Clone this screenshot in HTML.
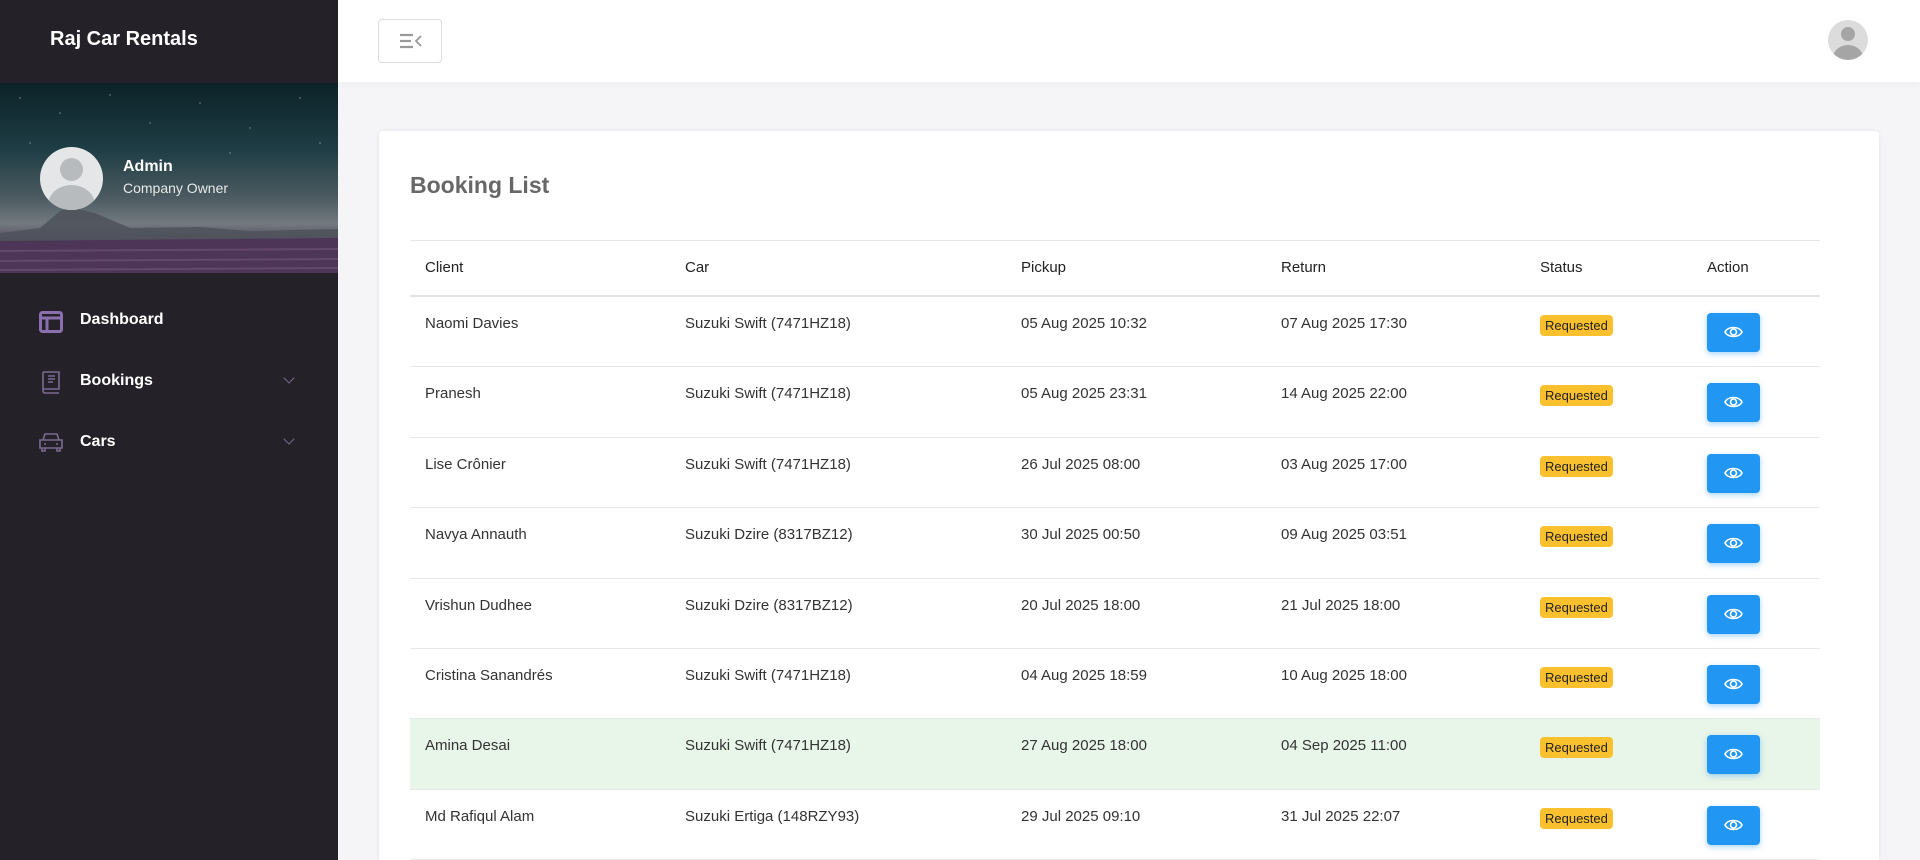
<!DOCTYPE html>
<html><head><meta charset="utf-8"><style>
*{box-sizing:border-box;margin:0;padding:0}
html,body{overflow:hidden}
body{width:1920px;height:860px;background:#f5f5f8;font-family:"Liberation Sans",Arial,sans-serif;position:relative}
.side{position:absolute;left:0;top:0;width:338px;height:860px;background:#242228}
.brand{position:absolute;left:50px;top:28px;color:#fff;font-size:20px;font-weight:bold}
.banner{position:absolute;left:0;top:83px;width:338px;height:190px;overflow:hidden;
background:linear-gradient(180deg,#0c2228 0%,#1f3d45 35%,#4a5a60 60%,#737a80 74%,#5a4f64 82%,#4c3556 92%,#3e2a47 100%)}
.av{position:absolute;left:40px;top:147px;width:63px;height:63px;border-radius:50%;background:#e4e6e8;overflow:hidden}
.av:before{content:"";position:absolute;left:20px;top:11px;width:23px;height:23px;border-radius:50%;background:#b8bbbe}
.av:after{content:"";position:absolute;left:8px;top:38px;width:47px;height:40px;border-radius:50%;background:#b8bbbe}
.adm{position:absolute;left:123px;top:158px;color:#fff;font-size:16px;font-weight:bold}
.own{position:absolute;left:123px;top:180px;color:#e8e8e8;font-size:14px}
.menu{position:absolute;left:0;width:338px;color:#fff;font-size:16px;font-weight:bold}
.menu svg{position:absolute;left:39px}
.menu span{position:absolute;left:80px}
.chev{position:absolute;left:285px;width:8px;height:8px;border-right:1.5px solid #7b6a90;border-bottom:1.5px solid #7b6a90;transform:rotate(45deg)}
.top{position:absolute;left:338px;top:0;width:1582px;height:82px;background:#fff;box-shadow:0 2px 8px rgba(0,0,0,.04)}
.tog{position:absolute;left:40px;top:19px;width:64px;height:44px;border:1px solid #ddd;border-radius:4px}
.uav{position:absolute;left:1490px;top:20px;width:40px;height:40px;border-radius:50%;background:#dcdcdc;overflow:hidden}
.uav:before{content:"";position:absolute;left:13px;top:7px;width:14px;height:14px;border-radius:50%;background:#a5a5a5}
.uav:after{content:"";position:absolute;left:5px;top:25px;width:30px;height:26px;border-radius:50%;background:#a5a5a5}
.card{position:absolute;left:379px;top:131px;width:1500px;height:729px;background:#fff;border-radius:4px 4px 0 0;box-shadow:0 0 4px rgba(0,0,0,.08)}
h2{position:absolute;left:31px;top:41px;font-size:23px;color:#676767}
.tbl{position:absolute;left:31px;top:109px;width:1410px;border-top:1px solid #e6e6e6}
.row{position:relative;height:70.4px;border-bottom:1px solid #e8e8e8;font-size:15px;color:#333}
.hd{height:56px;border-bottom:2px solid #e3e3e3;font-size:15px;color:#222}
.row div{position:absolute;top:17px;line-height:20px}
.hd div{top:17px}
.c1{left:15px}.c2{left:275px}.c3{left:611px}.c4{left:871px}.c5{left:1130px}.c6{left:1297px}
.badge{background:#fbc02d;color:#222;font-size:13px;border-radius:4px;padding:0 5px;line-height:21px!important;top:18px!important;display:inline-block}
.btn{width:53px;height:39px;background:#2196f3;border-radius:4px;box-shadow:0 2px 6px rgba(33,150,243,.4);top:16px!important}
.btn svg{position:absolute;left:17px;top:11px}
.hl{background:#e8f5e9}
</style></head><body>
<div class="side">
<div class="brand">Raj Car Rentals</div>
<div class="banner">
<svg width="338" height="190" style="position:absolute;left:0;top:0">
<g fill="#fff" opacity=".5"><circle cx="20" cy="15" r=".7"/><circle cx="60" cy="30" r=".7"/><circle cx="110" cy="12" r=".7"/><circle cx="150" cy="40" r=".7"/><circle cx="200" cy="20" r=".7"/><circle cx="250" cy="45" r=".7"/><circle cx="300" cy="15" r=".7"/><circle cx="320" cy="60" r=".7"/><circle cx="230" cy="70" r=".7"/><circle cx="30" cy="60" r=".7"/></g>
<path d="M0 150 L40 145 L60 128 L70 124 L95 130 L130 145 L200 144 L250 148 L338 146 L338 160 L0 160Z" fill="#4d525a" opacity=".85"/>
<path d="M0 158 L338 155 L338 190 L0 190Z" fill="#4c3556"/>
<g stroke="#7a5a85" stroke-width="2" opacity=".5"><line x1="0" y1="168" x2="338" y2="166"/><line x1="0" y1="178" x2="338" y2="176"/><line x1="0" y1="187" x2="338" y2="185"/></g>
</svg>
</div>
<div class="av"></div>
<div class="adm">Admin</div>
<div class="own">Company Owner</div>
<div class="menu" style="top:311px"><svg width="24" height="22" viewBox="0 0 24 22" style="top:0"><rect x="1.5" y="1.5" width="21" height="19" rx="2" fill="none" stroke="#8a6fae" stroke-width="3"/><line x1="1.5" y1="7" x2="22" y2="7" stroke="#8a6fae" stroke-width="3"/><line x1="8" y1="7" x2="8" y2="20" stroke="#8a6fae" stroke-width="3"/></svg><span>Dashboard</span></div>
<div class="menu" style="top:372px"><svg width="24" height="24" viewBox="0 0 24 24" style="top:-2px"><path d="M4 2h16v17H6a2 2 0 0 0 0 4h14M4 2v19" fill="none" stroke="#7b6a90" stroke-width="1.6"/><path d="M9 6h7M9 9h7M9 12h5" stroke="#7b6a90" stroke-width="1.5"/></svg><span>Bookings</span><div class="chev" style="top:2px"></div></div>
<div class="menu" style="top:433px"><svg width="24" height="20" viewBox="0 0 24 20" style="top:-1px"><path d="M4 8l2-6h12l2 6M1 8h22v8H1zM3 16v3h3v-3M18 16v3h3v-3M5 12h2M17 12h2" fill="none" stroke="#7b6a90" stroke-width="1.6"/></svg><span>Cars</span><div class="chev" style="top:2px"></div></div>
</div>
<div class="top">
<div class="tog"><svg width="24" height="16" viewBox="0 0 24 16" style="position:absolute;left:20px;top:13px"><path d="M1 2h13M1 8h11M1 14h13" stroke="#999" stroke-width="2.2"/><path d="M22 3l-5 5 5 5" fill="none" stroke="#999" stroke-width="1.8"/></svg></div>
<div class="uav"></div>
</div>
<div class="card">
<h2>Booking List</h2>
<div class="tbl">
<div class="row hd"><div class="c1">Client</div><div class="c2">Car</div><div class="c3">Pickup</div><div class="c4">Return</div><div class="c5">Status</div><div class="c6">Action</div></div>
<div class="row"><div class="c1">Naomi Davies</div><div class="c2">Suzuki Swift (7471HZ18)</div><div class="c3">05 Aug 2025 10:32</div><div class="c4">07 Aug 2025 17:30</div><div class="c5 badge">Requested</div><div class="c6 btn"><svg width="19" height="16" viewBox="0 0 19 16"><path d="M1 8C4 2 15 2 18 8C15 14 4 14 1 8Z" fill="none" stroke="#fff" stroke-width="1.6"/><circle cx="9.5" cy="8" r="3" fill="none" stroke="#fff" stroke-width="1.6"/></svg></div></div>
<div class="row"><div class="c1">Pranesh</div><div class="c2">Suzuki Swift (7471HZ18)</div><div class="c3">05 Aug 2025 23:31</div><div class="c4">14 Aug 2025 22:00</div><div class="c5 badge">Requested</div><div class="c6 btn"><svg width="19" height="16" viewBox="0 0 19 16"><path d="M1 8C4 2 15 2 18 8C15 14 4 14 1 8Z" fill="none" stroke="#fff" stroke-width="1.6"/><circle cx="9.5" cy="8" r="3" fill="none" stroke="#fff" stroke-width="1.6"/></svg></div></div>
<div class="row"><div class="c1">Lise Crônier</div><div class="c2">Suzuki Swift (7471HZ18)</div><div class="c3">26 Jul 2025 08:00</div><div class="c4">03 Aug 2025 17:00</div><div class="c5 badge">Requested</div><div class="c6 btn"><svg width="19" height="16" viewBox="0 0 19 16"><path d="M1 8C4 2 15 2 18 8C15 14 4 14 1 8Z" fill="none" stroke="#fff" stroke-width="1.6"/><circle cx="9.5" cy="8" r="3" fill="none" stroke="#fff" stroke-width="1.6"/></svg></div></div>
<div class="row"><div class="c1">Navya Annauth</div><div class="c2">Suzuki Dzire (8317BZ12)</div><div class="c3">30 Jul 2025 00:50</div><div class="c4">09 Aug 2025 03:51</div><div class="c5 badge">Requested</div><div class="c6 btn"><svg width="19" height="16" viewBox="0 0 19 16"><path d="M1 8C4 2 15 2 18 8C15 14 4 14 1 8Z" fill="none" stroke="#fff" stroke-width="1.6"/><circle cx="9.5" cy="8" r="3" fill="none" stroke="#fff" stroke-width="1.6"/></svg></div></div>
<div class="row"><div class="c1">Vrishun Dudhee</div><div class="c2">Suzuki Dzire (8317BZ12)</div><div class="c3">20 Jul 2025 18:00</div><div class="c4">21 Jul 2025 18:00</div><div class="c5 badge">Requested</div><div class="c6 btn"><svg width="19" height="16" viewBox="0 0 19 16"><path d="M1 8C4 2 15 2 18 8C15 14 4 14 1 8Z" fill="none" stroke="#fff" stroke-width="1.6"/><circle cx="9.5" cy="8" r="3" fill="none" stroke="#fff" stroke-width="1.6"/></svg></div></div>
<div class="row"><div class="c1">Cristina Sanandrés</div><div class="c2">Suzuki Swift (7471HZ18)</div><div class="c3">04 Aug 2025 18:59</div><div class="c4">10 Aug 2025 18:00</div><div class="c5 badge">Requested</div><div class="c6 btn"><svg width="19" height="16" viewBox="0 0 19 16"><path d="M1 8C4 2 15 2 18 8C15 14 4 14 1 8Z" fill="none" stroke="#fff" stroke-width="1.6"/><circle cx="9.5" cy="8" r="3" fill="none" stroke="#fff" stroke-width="1.6"/></svg></div></div>
<div class="row hl"><div class="c1">Amina Desai</div><div class="c2">Suzuki Swift (7471HZ18)</div><div class="c3">27 Aug 2025 18:00</div><div class="c4">04 Sep 2025 11:00</div><div class="c5 badge">Requested</div><div class="c6 btn"><svg width="19" height="16" viewBox="0 0 19 16"><path d="M1 8C4 2 15 2 18 8C15 14 4 14 1 8Z" fill="none" stroke="#fff" stroke-width="1.6"/><circle cx="9.5" cy="8" r="3" fill="none" stroke="#fff" stroke-width="1.6"/></svg></div></div>
<div class="row"><div class="c1">Md Rafiqul Alam</div><div class="c2">Suzuki Ertiga (148RZY93)</div><div class="c3">29 Jul 2025 09:10</div><div class="c4">31 Jul 2025 22:07</div><div class="c5 badge">Requested</div><div class="c6 btn"><svg width="19" height="16" viewBox="0 0 19 16"><path d="M1 8C4 2 15 2 18 8C15 14 4 14 1 8Z" fill="none" stroke="#fff" stroke-width="1.6"/><circle cx="9.5" cy="8" r="3" fill="none" stroke="#fff" stroke-width="1.6"/></svg></div></div>
</div>
</div>
</body></html>
